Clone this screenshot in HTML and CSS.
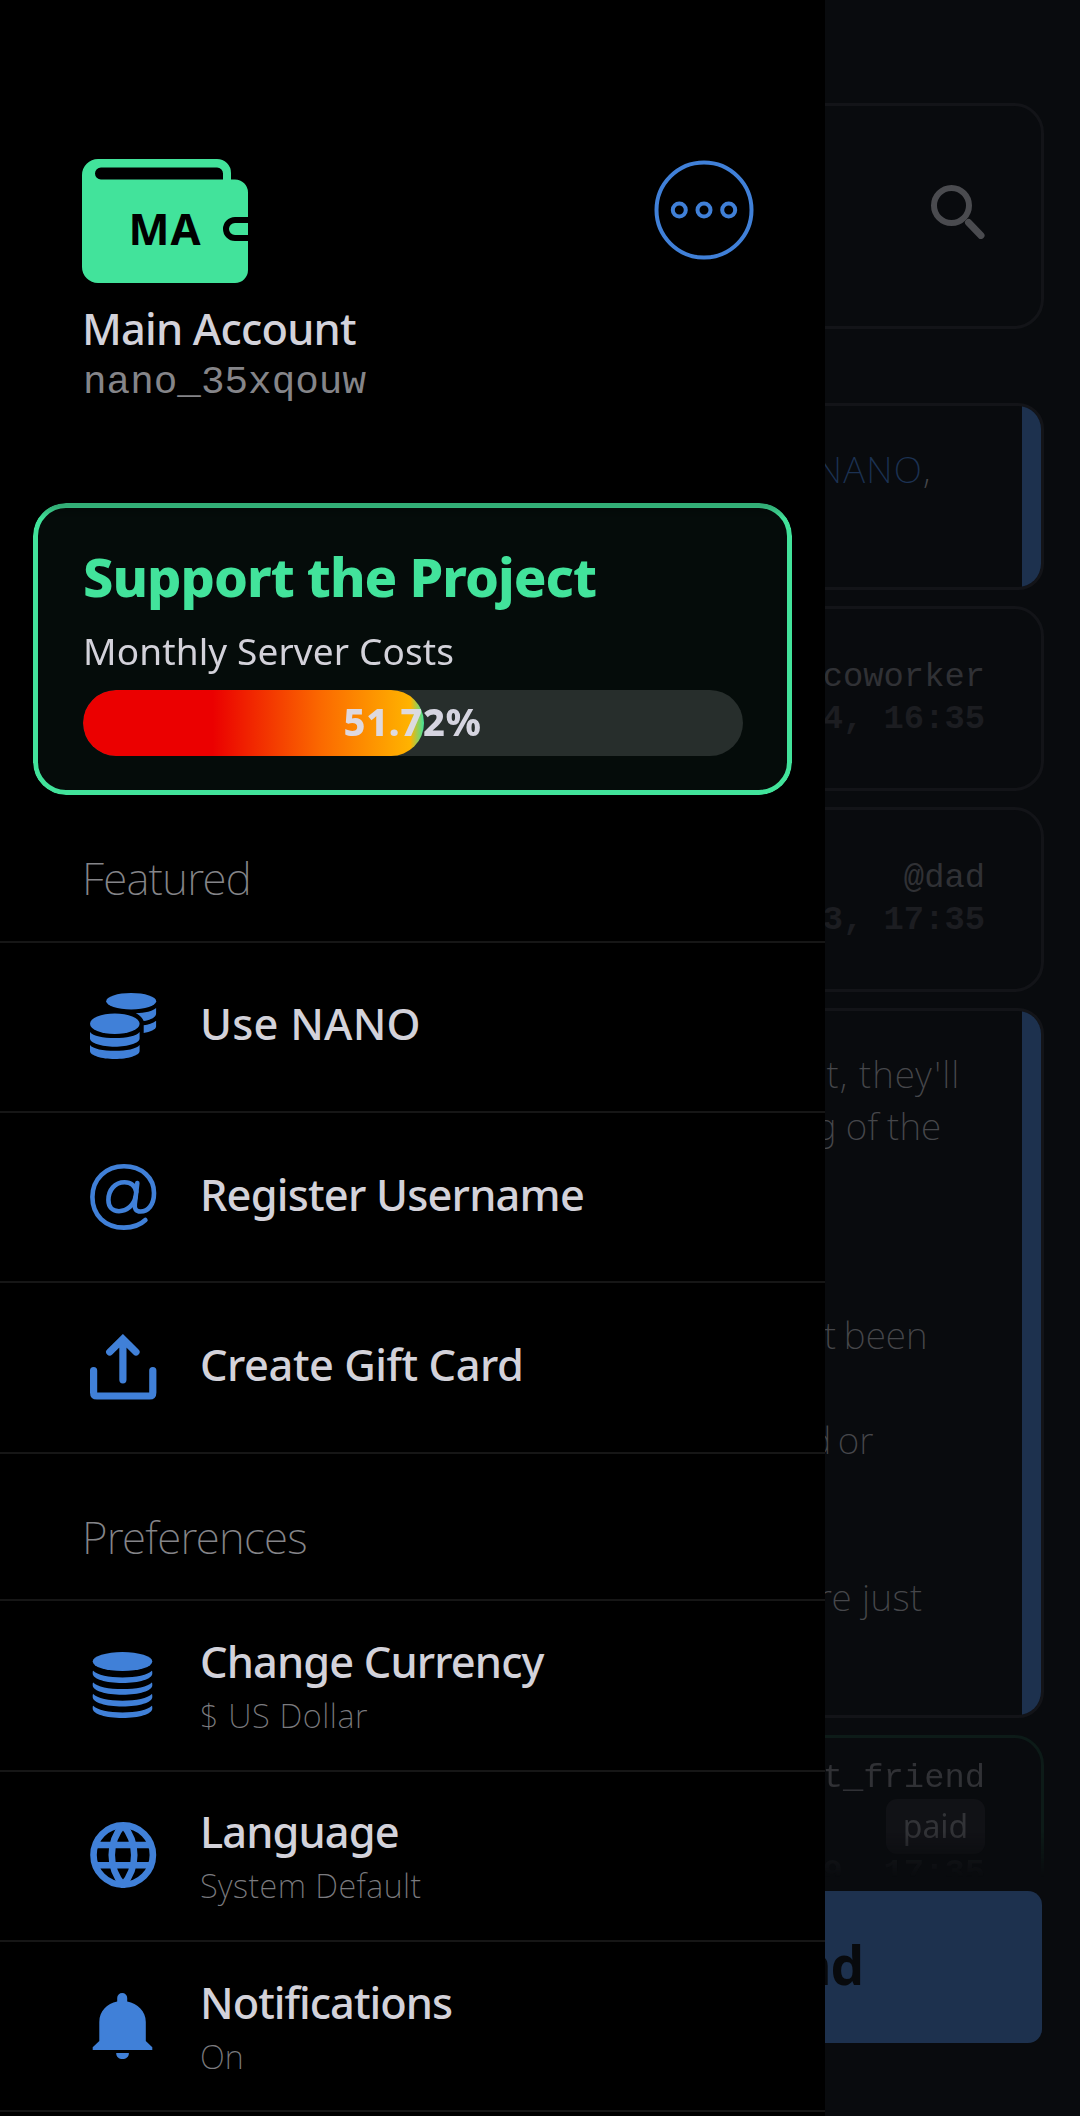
FILE: index.html
```html
<!DOCTYPE html>
<html lang="en">
<head>
<meta charset="utf-8">
<title>Account menu</title>
<link rel="stylesheet" href="styles.css">
</head>
<body>
<div class="app">
  <main class="home">
    <section class="card balance">
      <svg class="search" viewBox="0 0 54 54" fill="none" stroke="currentColor"><circle cx="20.5" cy="20.5" r="17.5" stroke-width="6"/><path d="M37.500 37.500L50 50.500" stroke-width="7" stroke-linecap="round"/></svg>
    </section>
    <section class="feed">
      <article class="card welcome">
        <p class="message"><span class="line l-nano"><a>NANO</a>,</span></p>
        <div class="stripe"></div>
      </article>
      <article class="card tx">
        <span class="who">coworker</span>
        <time>4, 16:35</time>
      </article>
      <article class="card tx">
        <span class="who">@dad</span>
        <time>3, 17:35</time>
      </article>
      <article class="card note">
        <p class="message">
          <span class="line l-they">t, they'll</span>
          <span class="line l-of">g of the</span>
          <span class="line l-been">t been</span>
          <span class="line l-or">d or</span>
          <span class="line l-just">re just</span>
        </p>
        <div class="stripe"></div>
      </article>
      <div class="fade">
        <article class="card paid">
          <span class="who">t_friend</span>
          <span class="chip">paid</span>
          <time>9, 17:35</time>
        </article>
      </div>
    </section>
    <button class="send">Send</button>
  </main>

  <aside class="drawer">
    <header class="account">
      <div class="account-top">
        <svg class="wallet" viewBox="0 0 166 124">
          <path fill="currentColor" fill-rule="evenodd" d="M16 0H135A14 14 0 0 1 149 14V20.500H153A13 13 0 0 1 166 33.500V58H153A12 12 0 0 0 153 82H166V111A13 13 0 0 1 153 124H16A16 16 0 0 1 0 108V16A16 16 0 0 1 16 0ZM19 8.500A6 6 0 0 0 19 20.500H141V14.500A6 6 0 0 0 135 8.500ZM166 64H153A6 6 0 0 0 153 76H166Z"/>
          <text class="initials" x="46.500" y="86" textLength="72">MA</text>
        </svg>
        <svg class="more" viewBox="0 0 100 100" fill="none" stroke="currentColor" stroke-width="4"><circle cx="50" cy="50" r="47.500"/><circle cx="25.300" cy="50" r="6.500"/><circle cx="50" cy="50" r="6.500"/><circle cx="74.700" cy="50" r="6.500"/></svg>
      </div>
      <h1 class="name">Main Account</h1>
      <p class="address">nano_35xqouw</p>
    </header>

    <section class="support">
      <h2>Support the Project</h2>
      <p>Monthly Server Costs</p>
      <div class="meter">
        <div class="meter-fill" style="width:51.72%"></div>
        <span class="meter-value">51.72%</span>
      </div>
    </section>

    <h3 class="heading">Featured</h3>
    <ul class="menu">
      <li class="row">
        <svg class="icon" viewBox="0 0 67 66" fill="currentColor"><ellipse cx="41.200" cy="8.200" rx="25" ry="8.200"/><ellipse cx="24.800" cy="30.700" rx="24.800" ry="10.300"/><path d="M0 39C3 43 13 45 24.800 45S46.500 43 49.600 39V45.500C49.600 50 38 53.700 24.800 53.700S0 50 0 45.500ZM0 52C3 56 13 57.800 24.800 57.800S46.500 56 49.600 52V58C49.600 62.500 38 66 24.800 66S0 62.500 0 58ZM66.100 15C63 18 55 20 45.800 20.300C50 22.300 52.500 25 53.700 28C61 27 66.100 24 66.100 20.500ZM66.100 27.700C63 30.500 58 31.600 53.700 32.200V40C60 39 66.100 36.500 66.100 33.500Z"/></svg>
        <div class="label"><span class="title t-use">Use NANO</span></div>
      </li>
      <li class="row">
        <svg class="icon" viewBox="0 0 67 66" fill="none" stroke="currentColor" stroke-width="4.600" stroke-linecap="round" stroke-linejoin="round"><path d="M55.400 56C50 61.200 43 63.600 34 63.600C15 63.600 2.400 51 2.400 33C2.400 15 16 2.300 34 2.300C52 2.300 64 14 64 29C64 41 58 47.500 50.500 47.500C46 47.500 44.300 45 44.800 40L47.300 19"/><path d="M46.300 28C45 21 40.500 18.200 34.500 18.200C25 18.200 18.400 26 18.400 36C18.400 43 22.500 47.200 29 47.200C37 47.200 44 41 45.500 33"/></svg>
        <div class="label"><span class="title t-register">Register Username</span></div>
      </li>
      <li class="row">
        <svg class="icon" viewBox="0 0 67 66" fill="none" stroke="currentColor" stroke-width="7.200" stroke-linecap="round"><path d="M3.600 36.500V58.500Q3.600 62 7 62H59.500Q62.800 62 62.800 58.500V36.500"/><path d="M32.900 8V45.800M19.700 18L32.900 5L46 18"/></svg>
        <div class="label"><span class="title t-gift">Create Gift Card</span></div>
      </li>
    </ul>

    <h3 class="heading">Preferences</h3>
    <ul class="menu">
      <li class="row">
        <svg class="icon" viewBox="0 0 67 66" fill="currentColor"><ellipse cx="32.500" cy="9.500" rx="29.800" ry="9.500"/><path id="coin" d="M3.200 18.700C7 23 19 25.400 32.500 25.400S58 23 61.800 18.700C62.300 19 62.300 20 62.300 21.500C62.300 27 49 31 32.500 31S2.700 27 2.700 21.500C2.700 20 2.700 19 3.200 18.700Z"/><use href="#coin" y="11.700"/><use href="#coin" y="23.400"/><use href="#coin" y="35"/></svg>
        <div class="label"><span class="title t-currency">Change Currency</span><span class="sub s-dollar">$ US Dollar</span></div>
      </li>
      <li class="row">
        <svg class="icon" viewBox="0 0 67 66" fill="none" stroke="currentColor" stroke-width="6.600"><circle cx="33.200" cy="33" r="29.700"/><path d="M33 3C18 20 18 46 33 63C48 46 48 20 33 3M6 23H60M6 43.200H60"/></svg>
        <div class="label"><span class="title t-language">Language</span><span class="sub s-default">System Default</span></div>
      </li>
      <li class="row">
        <svg class="icon" viewBox="0 0 67 66" fill="currentColor"><path d="M27.200 8.500V5A5 5 0 0 1 37.200 5V8.500C47.500 10.500 55.800 18 55.800 29V48L62.300 54.300V57H2.700V54.300L9.300 48V29C9.300 18 17 10.500 27.200 8.500ZM26.200 60H38.900C38.900 64 36 66 32.500 66S26.200 64 26.200 60Z"/></svg>
        <div class="label"><span class="title t-notify">Notifications</span><span class="sub">On</span></div>
      </li>
    </ul>
  </aside>
</div>
</body>
</html>
```
FILE: styles.css
```css
* { box-sizing: border-box; margin: 0; padding: 0; }

body {
  width: 1080px;
  height: 2116px;
  overflow: hidden;
  background: #090b0e;
  font-family: "Noto Sans", sans-serif;
}

.app { position: relative; width: 1080px; height: 2116px; overflow: hidden; }

/* Home screen, dimmed behind the drawer */
.home {
  display: flex;
  flex-direction: column;
  height: 100%;
  padding: 103px 36px 0;
}

.card {
  border: 3px solid #131418;
  border-radius: 30px;
  overflow: hidden;
}

.balance {
  flex: none;
  height: 226px;
  display: flex;
  justify-content: flex-end;
  padding: 79px 56px 0 0;
}
.search { width: 54px; height: 54px; color: #4a4b4f; }

.feed {
  display: flex;
  flex-direction: column;
  gap: 16.500px;
  margin-top: 74px;
}

.welcome { height: 186.500px; }
.note { height: 710px; }
.welcome, .note { display: flex; border-radius: 26px; }
.stripe { flex: none; width: 19.500px; background: #1d314e; }

.message {
  flex: 1;
  display: grid;
  grid-auto-rows: 52.300px;
  justify-items: end;
  padding-top: 37px;
  color: #46474b;
  font-size: 37px;
  font-weight: 250;
  line-height: 52.300px;
}
.line { white-space: pre; }
.message a { color: #1c3253; letter-spacing: 1.200px; }
.l-nano { padding-right: 91px; }
.l-they { grid-row: 1; padding-right: 61px; letter-spacing: 1.100px; }
.l-of { grid-row: 2; padding-right: 80px; letter-spacing: .2px; word-spacing: -1px; }
.l-been { grid-row: 6; padding-right: 94px; word-spacing: -2px; }
.l-or { grid-row: 8; padding-right: 148px; word-spacing: -3px; }
.l-just { grid-row: 11; padding-right: 99px; letter-spacing: .4px; }

.tx {
  display: flex;
  flex-direction: column;
  justify-content: center;
  height: 184.500px;
  padding: 0 56px 0 0;
}
.who, time {
  font-family: "Liberation Mono", monospace;
  font-size: 33.800px;
  line-height: 42.700px;
  text-align: right;
  color: #303135;
}
time { font-weight: 700; color: #1c1d21; }

.fade {
  height: 142px;
  overflow: hidden;
  mask-image: linear-gradient(#000 68%, transparent 100%);
}
.paid {
  display: flex;
  flex-direction: column;
  align-items: flex-end;
  height: 184px;
  padding: 19px 56px 0 0;
  border-color: #0d1b18;
}
.paid time { line-height: 38px; }
.chip {
  width: 99px;
  height: 55px;
  border-radius: 11px;
  background: #111216;
  color: #323337;
  font-size: 32px;
  line-height: 53px;
  text-align: center;
}

.send {
  flex: none;
  align-self: flex-end;
  width: 493px;
  height: 152px;
  margin: 14px 2.500px 0 0;
  padding: 0 0 5px 11px;
  border: 0;
  border-radius: 14px;
  background: #1d314e;
  color: #080a0d;
  font: 700 53px/1 "Noto Sans", sans-serif;
  letter-spacing: -1px;
}

/* Drawer */
.drawer {
  position: absolute;
  inset: 0 auto 0 0;
  width: 825px;
  overflow: hidden;
  background: #000;
  color: #d3d2da;
}

.account { height: 503px; padding: 159px 71px 0 82px; }
.account-top { display: flex; justify-content: space-between; height: 124px; }
.wallet { width: 166px; height: 124px; color: #42e39b; }
.initials { fill: #000; font-size: 43.500px; font-weight: 700; }
.more { width: 100px; height: 100px; margin-top: 1px; color: #4080d8; }
.name {
  margin-top: 19.500px;
  font-size: 43.400px;
  font-weight: 500;
  line-height: 52px;
  letter-spacing: -.8px;
}
.address {
  margin: 3px 0 0 1px;
  color: #858589;
  font-family: "Liberation Mono", monospace;
  font-size: 39.300px;
  line-height: 50px;
}

.support {
  height: 292px;
  margin: 0 33px;
  padding: 33px 44.500px 0 45px;
  border: 5.500px solid #42e39b;
  border-radius: 33px;
  background: #050c0a;
  mask-image: linear-gradient(rgba(0, 0, 0, .76) 3px, #000 16px);
}
.support h2 {
  color: #42e39b;
  font-size: 54px;
  font-weight: 800;
  line-height: 70px;
  letter-spacing: -.97px;
}
.support p {
  margin-top: 15px;
  font-size: 37px;
  font-weight: 400;
  line-height: 50px;
  letter-spacing: .12px;
}
.meter {
  position: relative;
  height: 66px;
  margin: 14px 0 0 -.5px;
  border-radius: 33px;
  background: #272e2c;
  overflow: hidden;
}
.meter-fill {
  height: 100%;
  border-radius: 33px;
  background: linear-gradient(90deg, #eb0000 38%, #fb6a00 70%, #ffb300 96%, #42e39b 100%);
}
.meter-value {
  position: absolute;
  inset: 0;
  color: rgba(221, 220, 232, .96);
  font-size: 38px;
  font-weight: 800;
  line-height: 62px;
  letter-spacing: .7px;
  text-align: center;
}

.heading {
  height: 145.500px;
  padding: 52.500px 82px 0;
  color: #858589;
  font-size: 44px;
  font-weight: 200;
  line-height: 60px;
  letter-spacing: -.72px;
}
.menu + .heading { padding-top: 53.500px; }

.menu { list-style: none; border-bottom: 2px solid #161616; }
.row {
  display: flex;
  align-items: center;
  height: 170.400px;
  padding: 0 82px 0 90px;
  border-top: 2px solid #161616;
}
.icon { flex: none; width: 67px; height: 66px; margin-bottom: 1px; color: #4080d8; }
.label {
  display: flex;
  flex-direction: column;
  gap: 7px;
  margin: 4px 0 0 43px;
}
.title { font-size: 43.400px; font-weight: 500; line-height: 50px; white-space: nowrap; }
.title:only-child { margin-bottom: 9px; }
.t-use { letter-spacing: .22px; }
.t-register { letter-spacing: -.8px; }
.t-gift { letter-spacing: -.47px; }
.t-currency { letter-spacing: -.88px; }
.t-language { letter-spacing: -.9px; }
.t-notify { letter-spacing: -.99px; }
.sub { color: #7b7b7f; font-size: 32.500px; font-weight: 200; line-height: 44px; }
.s-dollar { letter-spacing: .6px; }
.s-default { letter-spacing: .43px; }
```
